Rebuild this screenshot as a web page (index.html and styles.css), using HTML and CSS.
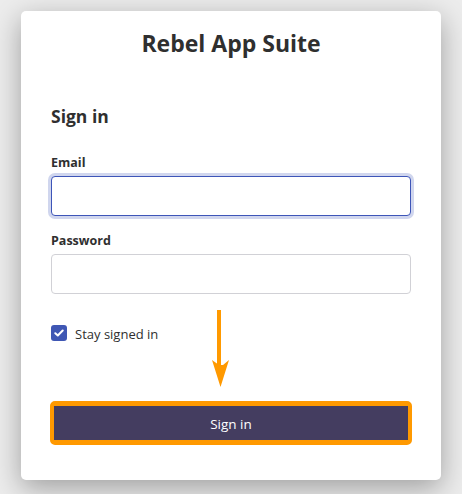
FILE: index.html
```html
<!DOCTYPE html>
<html lang="en">
<head>
<meta charset="utf-8">
<title>Rebel App Suite</title>
<link rel="stylesheet" href="styles.css">
</head>
<body>
<main class="card">
  <h1 class="title">Rebel App Suite</h1>
  <h2 class="heading">Sign in</h2>
  <form class="form">
    <label class="label" for="email">Email</label>
    <input class="input input-focus" id="email" type="email">
    <label class="label label-second" for="password">Password</label>
    <input class="input" id="password" type="password">
    <div class="check-row">
      <span class="checkbox">
        <svg width="10" height="8" viewBox="0 0 10 8"><path d="M1.3 4.2 L3.8 6.5 L8.7 1.5" fill="none" stroke="#fff" stroke-width="2" stroke-linecap="round" stroke-linejoin="round"/></svg>
      </span>
      <span class="check-text">Stay signed in</span>
    </div>
    <button class="button" type="button">Sign in</button>
  </form>
  <svg class="arrow" width="18" height="78" viewBox="0 0 18 78">
    <rect x="5" y="0" width="4" height="56" fill="#ff9900"/>
    <path d="M0 50 L7 55 L11 55 L17 50 L8.5 77 Z" fill="#ff9900"/>
  </svg>
</main>
</body>
</html>
```

FILE: styles.css
```css
* { box-sizing: border-box; }
html, body { height: 100%; }
body {
  margin: 0;
  background: #ececec;
  font-family: "Open Sans", "Noto Sans", sans-serif;
  color: #2f2f2f;
  padding: 11px 21px 14px;
}
.card {
  position: relative;
  background: #fff;
  border-radius: 5px;
  box-shadow: 0 8px 28px rgba(0,0,0,0.33);
  height: 469px;
  padding: 0 30px;
  display: flex;
  flex-direction: column;
}
.title {
  margin: 16px 0 0;
  font-size: 23px;
  line-height: 32px;
  font-weight: 700;
  text-align: center;
}
.heading {
  margin: 45px 0 0;
  font-size: 17.5px;
  line-height: 24px;
  font-weight: 700;
}
.form {
  display: flex;
  flex-direction: column;
  margin-top: 26px;
}
.label {
  font-size: 12.5px;
  line-height: 18px;
  font-weight: 700;
}
.label-second { margin-top: 16px; }
.input {
  margin-top: 4px;
  height: 40px;
  width: 100%;
  border: 1px solid #d1d1d6;
  border-radius: 4px;
  background: #fff;
  font: inherit;
}
.input-focus {
  border-color: #3d55b8;
  box-shadow: 0 0 0 3px #d0d6ee;
  outline: none;
}
.check-row {
  display: flex;
  align-items: center;
  gap: 8px;
  margin-top: 30px;
  height: 18px;
}
.checkbox {
  width: 16px;
  height: 16px;
  border-radius: 3px;
  background: #3f57b4;
  display: flex;
  align-items: center;
  justify-content: center;
}
.check-text {
  font-size: 13px;
  line-height: 18px;
  padding-top: 2px;
}
.button {
  margin: 59px -1px 0;
  height: 44px;
  border: solid #ff9900;
  border-width: 5px 4px;
  border-radius: 5px;
  background: #443d60;
  color: #fff;
  font-family: inherit;
  font-size: 13.5px;
  padding-top: 2px;
}
.arrow {
  position: absolute;
  left: 191px;
  top: 299px;
}
```
